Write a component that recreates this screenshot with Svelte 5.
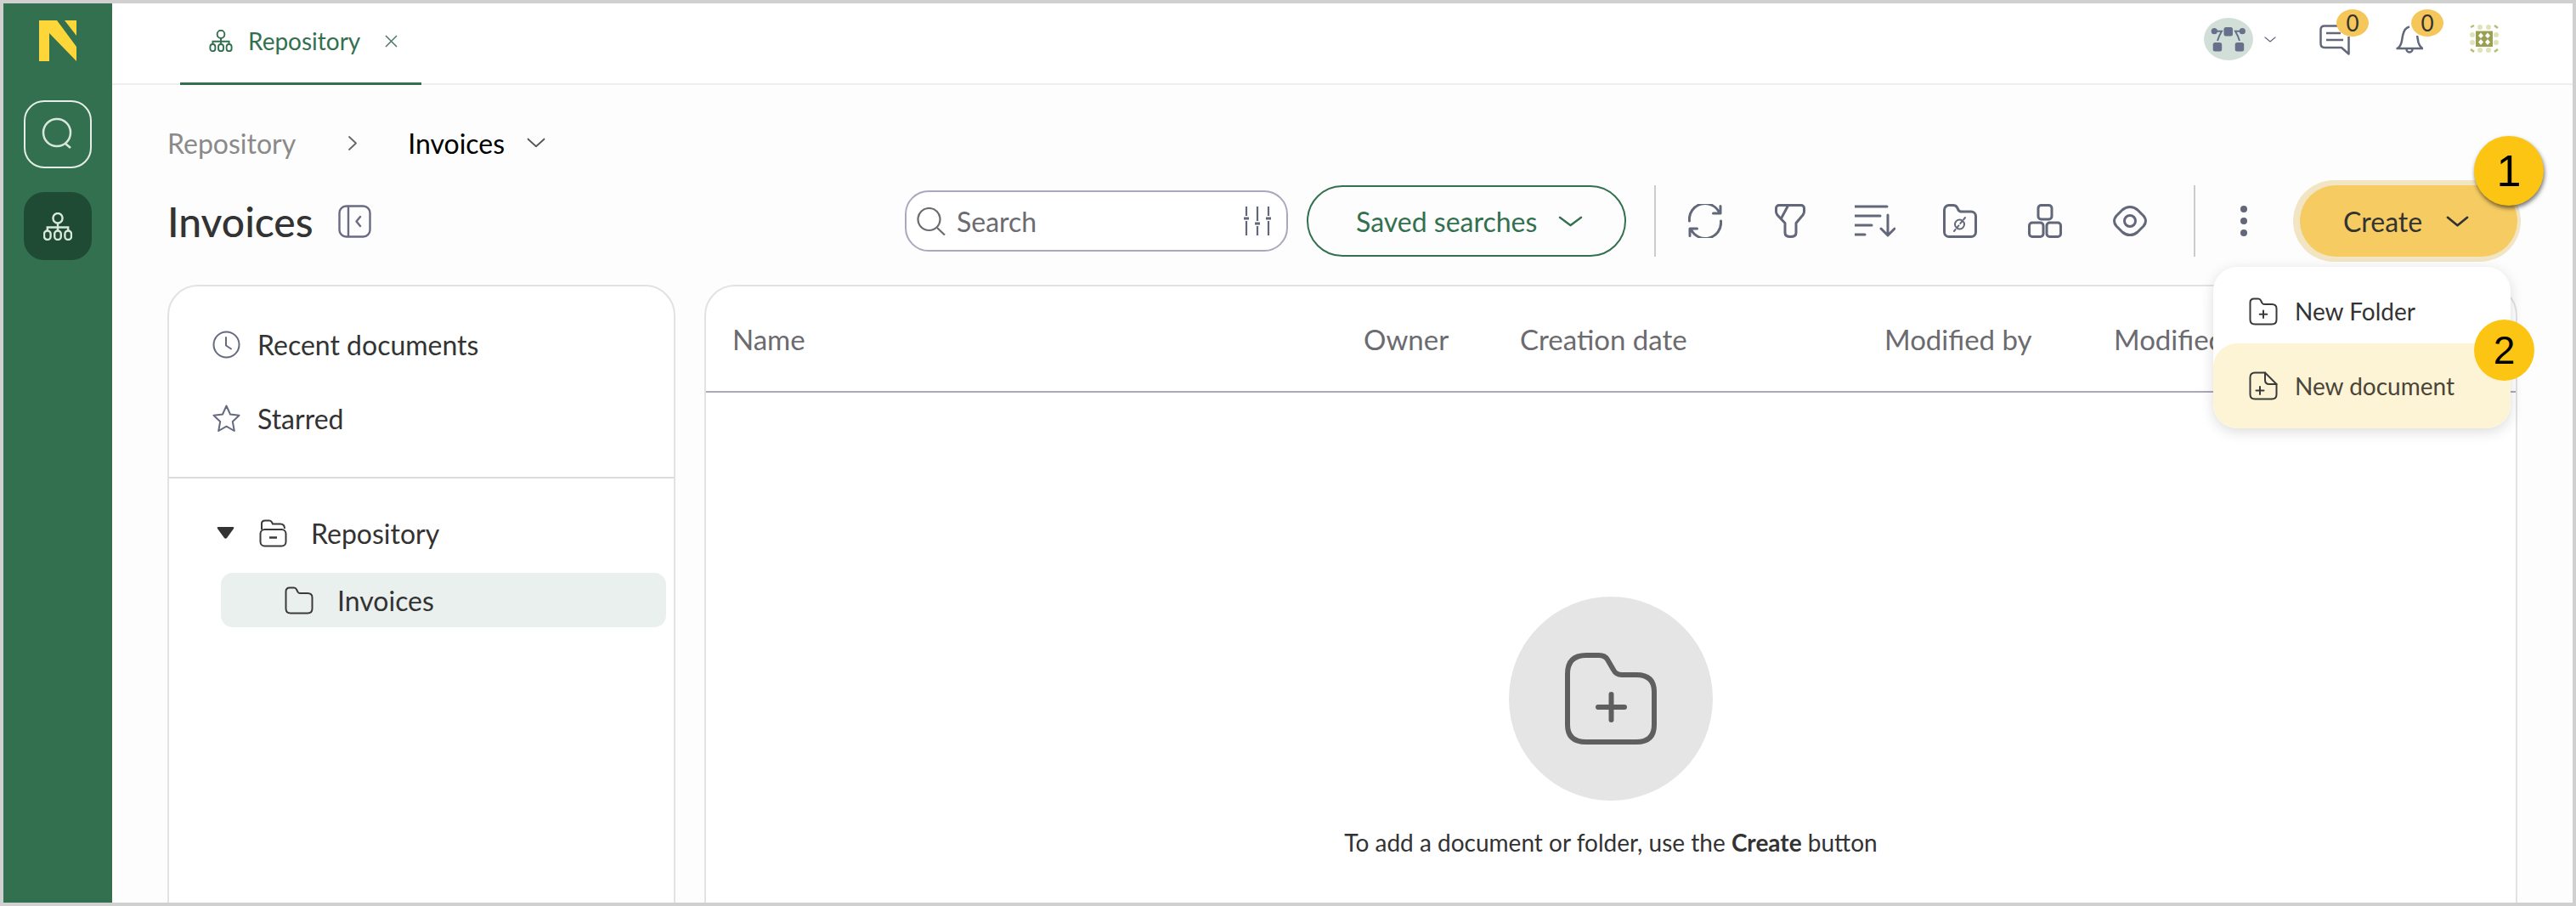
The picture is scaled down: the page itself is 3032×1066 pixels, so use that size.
<script>
  const columns = [
    { label: 'Name', width: 743 },
    { label: 'Owner', width: 184 },
    { label: 'Creation date', width: 429 },
    { label: 'Modified by', width: 270 },
    { label: 'Modified on', width: 260 }
  ]
</script>

{#snippet orgIcon(size, height)}
  <svg width={size} height={height} viewBox="0 0 34 33" fill="none" stroke="currentColor" stroke-width="2.4">
    <rect x="11.5" y="1" width="11" height="11.5" rx="5.5" />
    <path d="M17 12.5V21M4.8 22V17.5H29.2V22" />
    <rect x="1" y="21.5" width="7.6" height="10.5" rx="3.8" />
    <rect x="13.2" y="21.5" width="7.6" height="10.5" rx="3.8" />
    <rect x="25.4" y="21.5" width="7.6" height="10.5" rx="3.8" />
  </svg>
{/snippet}

{#snippet chevron(w, h, sw)}
  <svg width={w} height={h} viewBox="0 0 28 14" preserveAspectRatio="none" fill="none" stroke="currentColor" stroke-width={sw} stroke-linecap="round" stroke-linejoin="round">
    <path d="M2 2L14 12L26 2" />
  </svg>
{/snippet}

<div class="frame">
  <nav class="rail">
    <svg class="logo" width="44" height="48" viewBox="0 0 44 48" fill="#fdd63a">
      <path d="M0 0H21L44 31V48L12 15V48H0Z" />
      <path d="M30 0H44V18Z" />
    </svg>
    <div class="rail-btn outlined">
      <svg width="38" height="40" viewBox="0 0 38 40" fill="none" stroke="#d9e8dd" stroke-width="2.5">
        <circle cx="18" cy="18" r="16" />
        <path d="M28 31L34 36" />
      </svg>
    </div>
    <div class="rail-btn active">
      {@render orgIcon(34, 33)}
    </div>
  </nav>

  <div class="main">
    <header class="topbar">
      <div class="tab">
        {@render orgIcon(28, 26)}
        <span class="tab-label">Repository</span>
        <svg width="15" height="15" viewBox="0 0 15 15" fill="none" stroke="#4d7a62" stroke-width="1.5">
          <path d="M1 1L14 14M14 1L1 14" />
        </svg>
      </div>

      <div class="top-actions">
        <div class="avatar">
          <svg width="58" height="50" viewBox="0 0 58 50" fill="#66708a" stroke="none">
            <rect x="23.5" y="11" width="10.5" height="10.5" rx="2.5" />
            <rect x="10.7" y="29" width="10.5" height="10.5" rx="2.5" />
            <rect x="36.7" y="29" width="10.5" height="10.5" rx="2.5" />
            <circle cx="12.3" cy="15.7" r="3.6" />
            <circle cx="45.3" cy="15.7" r="3.6" />
            <path d="M12 15.7H21C19 19 17.5 22 16 27M46 15.7H37C39 19 40.5 22 42 27" fill="none" stroke="#66708a" stroke-width="2" />
          </svg>
        </div>
        <span class="avatar-chevron">{@render chevron(14, 7, 2.4)}</span>

        <div class="notify chat">
          <svg width="36" height="36" viewBox="0 0 36 36" fill="none" stroke="#62677a" stroke-width="2.5" stroke-linejoin="round">
            <path d="M22 1.5H6Q1.5 1.5 1.5 6V22Q1.5 27 6 27H26L34.5 34.5V14" />
            <path d="M8 10H25M8 18H28" />
          </svg>
          <span class="count">0</span>
        </div>

        <div class="notify bell">
          <svg width="34" height="34" viewBox="0 0 34 34" fill="none" stroke="#62677a" stroke-width="2.5" stroke-linejoin="round">
            <path d="M1.5 27H33M3 27Q7 24 8 18L9 12Q11 2.5 17 1.5M26 12L27.5 20Q28.5 24 32 27" />
            <path d="M13.5 28A3.5 3.5 0 1 0 20.5 28" />
          </svg>
          <span class="count">0</span>
        </div>

        <svg class="grid-icon" width="34" height="33" viewBox="0 0 34 33">
          <g fill="#e0e3b8">
            <circle cx="12" cy="3" r="3" /><circle cx="22" cy="3" r="3" />
            <circle cx="12" cy="30" r="3" /><circle cx="22" cy="30" r="3" />
            <circle cx="3" cy="12" r="3" /><circle cx="3" cy="21" r="3" />
            <circle cx="31" cy="12" r="3" /><circle cx="31" cy="21" r="3" />
          </g>
          <path d="M1 3L5 1M29 1L33 4M1 29L5 32M29 32L33 29" stroke="#b9bc78" stroke-width="2.5" fill="none" />
          <rect x="7" y="7.5" width="20" height="18.5" fill="#9a9f52" />
          <g fill="#fff">
            <path d="M13 9.5L16 13L13 16L10 13ZM21 9.5L24 13L21 16L18 13ZM13 17L16 20.5L13 24L10 20.5ZM21 17L24 20.5L21 24L18 20.5Z" />
          </g>
        </svg>
      </div>
    </header>

    <div class="content">
      <div class="crumbs">
        <span class="crumb-parent">Repository</span>
        <svg class="crumb-sep" width="10" height="17" viewBox="0 0 10 17" fill="none" stroke="#666" stroke-width="1.8" stroke-linecap="round" stroke-linejoin="round">
          <path d="M1 1L9 8.5L1 16" />
        </svg>
        <span class="crumb-current">Invoices</span>
        <span class="crumb-chevron">{@render chevron(22, 12, 2.4)}</span>
      </div>

      <div class="toolbar">
        <h1>Invoices</h1>
        <svg class="panel-icon" width="39" height="39" viewBox="0 0 39 39" fill="none" stroke="#6a6a85" stroke-width="2.4" stroke-linecap="round" stroke-linejoin="round">
          <rect x="1.5" y="1.5" width="36" height="36" rx="8" />
          <path d="M12 2V37" />
          <path d="M26 14L21.5 19.5L26 25" />
        </svg>

        <label class="search">
          <svg width="34" height="33" viewBox="0 0 34 33" fill="none" stroke="#6b6b70" stroke-width="2.2">
            <circle cx="14.5" cy="14" r="13" />
            <path d="M24 24L33 32.5" />
          </svg>
          <span class="search-text">Search</span>
          <svg class="sliders" width="32" height="34" viewBox="0 0 32 34" fill="none" stroke="#62677a" stroke-width="2.2">
            <path d="M3 0V11M3 17V34M16 0V17M16 23V34M29 0V11M29 17V34" />
            <path d="M0 14H6M13 20H19M26 14H32" stroke-width="3" />
          </svg>
        </label>

        <div class="saved">
          <span>Saved searches</span>
          {@render chevron(29, 13, 2.6)}
        </div>

        <span class="divider first"></span>

        <div class="tool">
          <svg width="40" height="40" viewBox="0 0 40 40">
            <path d="M1.5 20A18.5 18.5 0 0 1 37 11M38 2.5V11H29.5M38.5 20A18.5 18.5 0 0 1 3 29M2 37.5V29H10.5" />
          </svg>
        </div>
        <div class="tool">
          <svg width="36" height="40" viewBox="0 0 36 40">
            <path d="M5 1.5H31A3.5 3.5 0 0 1 34.5 5V9Q34.5 11 33 13L25 22.5V34Q25 38.5 18.5 38.5Q12 38.5 12 34V22.5L3 13Q1.5 11 1.5 9V5A3.5 3.5 0 0 1 5 1.5Z" />
            <path d="M15.5 2L7.5 17" />
          </svg>
        </div>
        <div class="tool">
          <svg width="48" height="38" viewBox="0 0 48 38">
            <path d="M0 2H38M0 13H30M0 24H20M0 35H12" />
            <path d="M39 12V36M31 28L39 36L47 28" />
          </svg>
        </div>
        <div class="tool">
          <svg width="40" height="40" viewBox="0 0 40 40">
            <path d="M1.5 7A5.5 5.5 0 0 1 7 1.5H12Q15 1.5 16.5 4L18 7Q19 9 22 9H33A5.5 5.5 0 0 1 38.5 14.5V33A5.5 5.5 0 0 1 33 38.5H7A5.5 5.5 0 0 1 1.5 33Z" />
            <circle cx="19.5" cy="24" r="5.5" stroke-width="2" />
            <path d="M26 16L13 32" stroke-width="2" stroke-dasharray="3 3" />
          </svg>
        </div>
        <div class="tool">
          <svg width="40" height="40" viewBox="0 0 40 40">
            <rect x="12" y="1.5" width="16" height="16.5" rx="3.5" />
            <rect x="1.5" y="22" width="16.5" height="16.5" rx="3.5" />
            <rect x="22" y="22" width="16.5" height="16.5" rx="3.5" />
          </svg>
        </div>
        <div class="tool">
          <svg width="40" height="36" viewBox="0 0 40 36">
            <path d="M20 1.5Q25 1.5 29 5L36 12Q38.5 15 38.5 18Q38.5 21 36 24L29 31Q25 34.5 20 34.5Q15 34.5 11 31L4 24Q1.5 21 1.5 18Q1.5 15 4 12L11 5Q15 1.5 20 1.5Z" />
            <circle cx="20" cy="18" r="6.5" />
          </svg>
        </div>

        <span class="divider second"></span>

        <div class="more">
          <i></i><i></i><i></i>
        </div>

        <div class="create">
          <span>Create</span>
          {@render chevron(27, 13, 2.8)}
          <span class="marker marker-one">1</span>

          <div class="menu">
            <div class="menu-item">
              <svg width="34" height="33" viewBox="0 0 34 33">
                <path d="M1.5 6Q1.5 1.5 6 1.5H11Q13 1.5 14 3.5L15.5 6.5Q16.5 8 18 8H27Q32.5 8 32.5 13V26Q32.5 31.5 27 31.5H7Q1.5 31.5 1.5 26Z" />
                <path d="M17 15.5V24M12.7 19.7H21.3" />
              </svg>
              <span>New Folder</span>
            </div>
            <div class="menu-item picked">
              <svg width="34" height="34" viewBox="0 0 34 34">
                <path d="M7 1.5H19L32.5 15V27Q32.5 32.5 27 32.5H7Q1.5 32.5 1.5 27V7Q1.5 1.5 7 1.5Z" />
                <path d="M19 1.5V10Q19 15 24 15H32.5" />
                <path d="M13 18V27M8.5 22.5H17.5" />
              </svg>
              <span>New document</span>
              <span class="marker marker-two">2</span>
            </div>
          </div>
        </div>
      </div>

      <div class="panes">
        <aside class="tree-card">
          <div class="quick">
            <div class="quick-row">
              <svg width="33" height="33" viewBox="0 0 33 33" fill="none" stroke="#666a80" stroke-width="2" stroke-linecap="round" stroke-linejoin="round">
                <circle cx="16.5" cy="16.5" r="15" />
                <path d="M16 8V17.5L22 21.5" />
              </svg>
              <span>Recent documents</span>
            </div>
            <div class="quick-row">
              <svg width="33" height="33" viewBox="0 0 33 33" fill="none" stroke="#666a80" stroke-width="2" stroke-linejoin="round">
                <path d="M16.5 1.5L21 11.5L31.5 12.8L23.8 20L25.8 31L16.5 25.7L7.2 31L9.2 20L1.5 12.8L12 11.5Z" />
              </svg>
              <span>Starred</span>
            </div>
          </div>

          <div class="tree">
            <div class="tree-row">
              <svg class="caret" width="21" height="14" viewBox="0 0 21 14" fill="#333">
                <path d="M2 0H19Q21 0 20 2L12 13Q10.500 14.500 9 13L1 2Q0 0 2 0Z" />
              </svg>
              <svg width="33" height="33" viewBox="0 0 33 33" fill="none" stroke="#3a3a3a" stroke-width="2" stroke-linejoin="round">
                <path d="M3 12V5Q3 1.500 7 1.500H12Q14 1.500 15 3.500L16 5.500H25Q30 5.500 30 11" />
                <rect x="1.500" y="12" width="30" height="19.500" rx="5" />
                <path d="M12 21.500H21" stroke-width="2.500" />
              </svg>
              <span>Repository</span>
            </div>
            <div class="tree-row child">
              <svg width="34" height="33" viewBox="0 0 34 33" fill="none" stroke="#3a3a3a" stroke-width="2" stroke-linejoin="round">
                <path d="M1.500 6Q1.500 1.500 6 1.500H11Q13 1.500 14 3.500L15.500 6.500Q16.500 8 18 8H27Q32.500 8 32.500 13V26Q32.500 31.500 27 31.500H7Q1.500 31.500 1.500 26Z" />
              </svg>
              <span>Invoices</span>
            </div>
          </div>
        </aside>

        <section class="docs-card">
          <div class="docs-head">
            {#each columns as col (col.label)}
              <span class="col" style="width: {col.width}px">{col.label}</span>
            {/each}
          </div>

          <div class="empty">
            <div class="empty-circle">
              <svg width="108" height="108" viewBox="0 0 108 108" fill="none" stroke="#5f5f5f" stroke-width="6" stroke-linecap="round" stroke-linejoin="round">
                <path d="M3 25Q3 3 25 3H40Q47 3 50 8L57 20Q60 26 67 26H84Q105 26 105 46V85Q105 105 84 105H25Q3 105 3 85Z" />
                <path d="M54.500 49V79M39 64H70" />
              </svg>
            </div>
            <p>To add a document or folder, use the <b>Create</b> button</p>
          </div>
        </section>
      </div>
    </div>
  </div>
</div>

<style>
  :global(body) {
    margin: 0;
    background: #fff;
  }

  .frame {
    box-sizing: border-box;
    width: 3032px;
    height: 1066px;
    border: 4px solid #d0d0d0;
    display: flex;
    overflow: hidden;
    font-family: Lato, 'Open Sans', sans-serif;
    color: #333;
    background: #fdfdfd;
  }

  .rail {
    width: 128px;
    flex: none;
    background: #33704f;
    display: flex;
    flex-direction: column;
    align-items: center;
    padding-top: 20px;
    box-sizing: border-box;
  }

  .logo {
    margin-left: 8px;
    margin-right: 9px;
    margin-bottom: 46px;
  }

  .rail-btn {
    box-sizing: border-box;
    width: 80px;
    height: 80px;
    border-radius: 24px;
    display: flex;
    align-items: center;
    justify-content: center;
  }

  .rail-btn.outlined {
    border: 2px solid #e3efe6;
    margin-bottom: 28px;
  }

  .rail-btn.active {
    background: #1f4a33;
    color: #d9e8dd;
  }

  .main {
    flex: 1;
    min-width: 0;
    display: flex;
    flex-direction: column;
  }

  .topbar {
    height: 94px;
    flex: none;
    background: #fff;
    border-bottom: 2px solid #eeeeee;
    box-sizing: content-box;
    display: flex;
    align-items: flex-start;
    padding-left: 80px;
    padding-right: 87px;
  }

  .tab {
    box-sizing: border-box;
    width: 284px;
    height: 96px;
    border-bottom: 3px solid #33704f;
    color: #33704f;
    display: flex;
    align-items: center;
    padding-left: 34px;
    padding-bottom: 5px;
  }

  .tab-label {
    font-size: 28px;
    margin-left: 18px;
    margin-right: 29px;
  }

  .top-actions {
    margin-left: auto;
    display: flex;
    align-items: flex-start;
    padding-top: 17px;
  }

  .avatar {
    width: 58px;
    height: 50px;
    border-radius: 50%;
    background: #d2dfd9;
    display: flex;
  }

  .avatar-chevron {
    color: #666a80;
    margin: 22px 0 0 13px;
    display: flex;
  }

  .notify {
    position: relative;
    margin-top: 8px;
    display: flex;
  }

  .chat {
    margin-left: 51px;
  }

  .bell {
    margin-left: 53px;
    margin-top: 9px;
  }

  .count {
    position: absolute;
    left: 20px;
    top: -18px;
    width: 38px;
    height: 32px;
    border-radius: 50%;
    background: #f5c659;
    color: #333;
    font-size: 26px;
    line-height: 32px;
    text-align: center;
  }

  .bell .count {
    left: 19px;
    top: -19px;
  }

  .grid-icon {
    margin-left: 54px;
    margin-top: 8px;
  }

  .content {
    flex: 1;
    min-height: 0;
    padding: 48px 65px 0;
    display: flex;
    flex-direction: column;
  }

  .crumbs {
    height: 40px;
    display: flex;
    align-items: center;
    font-size: 32px;
    margin-bottom: 30px;
  }

  .crumb-parent {
    color: #8a8a8a;
    margin-right: 62px;
  }

  .crumb-sep {
    margin-right: 60px;
  }

  .crumb-current {
    color: #000;
    margin-right: 26px;
  }

  .crumb-chevron {
    display: flex;
    color: #555;
  }

  .toolbar {
    height: 84px;
    display: flex;
    align-items: center;
    flex: none;
    margin-bottom: 33px;
  }

  h1 {
    margin: 0 29px 0 0;
    font-size: 48px;
    font-weight: 500;
    color: #333;
  }

  .search {
    box-sizing: border-box;
    width: 451px;
    height: 72px;
    margin-left: auto;
    border: 2px solid #a9a8bd;
    border-radius: 28px;
    background: #fff;
    display: flex;
    align-items: center;
    padding: 0 18px 0 12px;
  }

  .search-text {
    margin-left: 13px;
    font-size: 32px;
    color: #6b6b70;
  }

  .sliders {
    margin-left: auto;
  }

  .saved {
    box-sizing: border-box;
    width: 376px;
    height: 84px;
    margin-left: 22px;
    border: 2px solid #33704f;
    border-radius: 42px;
    color: #33704f;
    font-size: 32px;
    display: flex;
    align-items: center;
    padding-left: 56px;
    gap: 25px;
  }

  .divider {
    width: 2px;
    height: 84px;
    background: #cccccc;
    flex: none;
  }

  .divider.first {
    margin-left: 33px;
    margin-right: 8px;
  }

  .divider.second {
    margin-left: 25px;
  }

  .tool {
    width: 100px;
    height: 84px;
    display: flex;
    align-items: center;
    justify-content: center;
  }

  .tool svg {
    fill: none;
    stroke: #62677a;
    stroke-width: 3;
    stroke-linejoin: round;
    stroke-linecap: round;
  }

  .more {
    width: 114px;
    display: flex;
    flex-direction: column;
    align-items: center;
    gap: 6px;
  }

  .more i {
    width: 8px;
    height: 8px;
    border-radius: 50%;
    background: #62677a;
  }

  .create {
    position: relative;
    box-sizing: border-box;
    width: 256px;
    height: 84px;
    margin-left: 9px;
    flex: none;
    background: #f5cb62;
    border-radius: 42px;
    box-shadow: -2px 0 0 6px #f2e5c3;
    font-size: 32px;
    display: flex;
    align-items: center;
    padding-left: 51px;
    gap: 28px;
  }

  .marker {
    position: absolute;
    border-radius: 50%;
    background: #fdc513;
    color: #000;
    font-family: 'Liberation Sans', Arial, sans-serif;
    display: flex;
    align-items: center;
    justify-content: center;
  }

  .marker-one {
    left: 205px;
    top: -58px;
    width: 82px;
    height: 82px;
    font-size: 52px;
    box-shadow: 1px 3px 5px rgba(0, 0, 0, 0.55);
  }

  .marker-two {
    left: 307px;
    top: -28px;
    width: 71px;
    height: 72px;
    font-size: 46px;
  }

  .menu {
    position: absolute;
    left: -102px;
    top: 96px;
    width: 350px;
    height: 190px;
    background: #fff;
    border-radius: 28px;
    box-shadow: 0 4px 16px rgba(0, 0, 0, 0.14);
    z-index: 3;
  }

  .menu-item {
    position: relative;
    box-sizing: border-box;
    height: 90px;
    display: flex;
    align-items: center;
    gap: 20px;
    padding: 14px 0 0 42px;
    font-size: 28px;
    color: #333;
  }

  .menu-item svg {
    fill: none;
    stroke: #3a3a3a;
    stroke-width: 2;
    stroke-linejoin: round;
    stroke-linecap: round;
    flex: none;
  }

  .menu-item.picked {
    height: 100px;
    background: #fdf4d6;
    border-radius: 28px;
    color: #4a4538;
    padding-top: 0;
  }

  .panes {
    flex: 1;
    min-height: 0;
    display: grid;
    grid-template-columns: 598px 1fr;
    gap: 34px;
  }

  .tree-card,
  .docs-card {
    box-sizing: border-box;
    height: 760px;
    background: #fff;
    border: 2px solid #e2e2e2;
    border-radius: 36px 36px 0 0;
  }

  .quick {
    box-sizing: border-box;
    height: 226px;
    border-bottom: 2px solid #dcdcdc;
    padding-top: 51px;
    display: flex;
    flex-direction: column;
    gap: 53px;
  }

  .quick-row {
    display: flex;
    align-items: center;
    gap: 20px;
    padding-left: 51px;
    font-size: 32px;
    height: 34px;
  }

  .tree {
    padding-top: 46px;
    font-size: 32px;
  }

  .tree-row {
    display: flex;
    align-items: center;
    height: 36px;
    padding-left: 56px;
  }

  .caret {
    margin-right: 29px;
  }

  .tree-row span {
    margin-left: 28px;
  }

  .tree-row.child {
    box-sizing: border-box;
    height: 64px;
    width: 524px;
    margin: 29px 0 0 61px;
    padding-left: 75px;
    background: #eaf0ed;
    border-radius: 14px;
  }

  .docs-head {
    box-sizing: border-box;
    height: 125px;
    border-bottom: 2px solid #a9a8bd;
    display: flex;
    align-items: center;
    padding-left: 31px;
    font-size: 33px;
    color: #6b6b70;
  }

  .col {
    flex: none;
    white-space: nowrap;
  }

  .empty {
    display: flex;
    flex-direction: column;
    align-items: center;
    padding-top: 240px;
  }

  .empty-circle {
    width: 240px;
    height: 240px;
    border-radius: 50%;
    background: #e5e5e5;
    display: flex;
    align-items: center;
    justify-content: center;
  }

  .empty p {
    margin: 32px 0 0;
    font-size: 28px;
    line-height: 34px;
    color: #333;
  }
</style>
